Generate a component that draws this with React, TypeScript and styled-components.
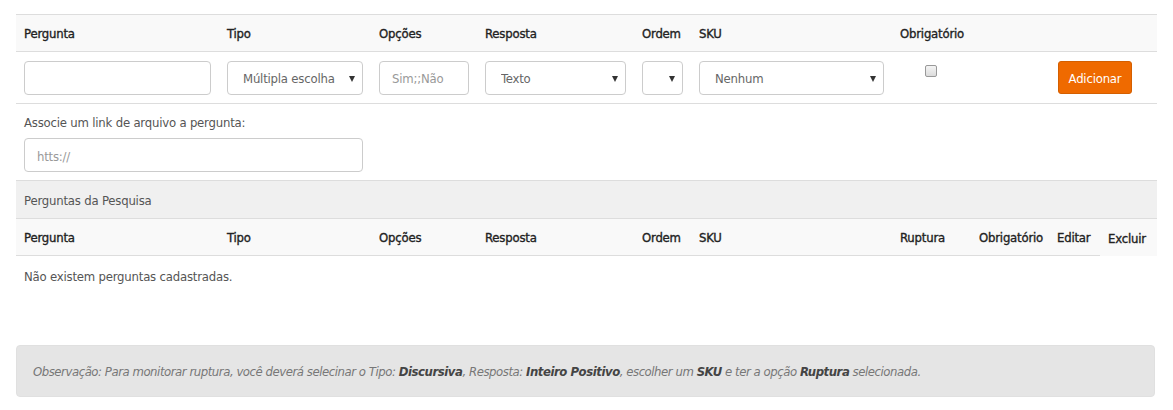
import React, { FC } from 'react';
import styled, { createGlobalStyle } from 'styled-components';

/* Global */

const GlobalStyle = createGlobalStyle`
  body {
    margin: 0;
    background: #fff;
    font-family: "DejaVu Sans Condensed", "Liberation Sans", sans-serif;
    font-size: 13px;
    letter-spacing: -0.2px;
    line-height: 18px;
    color: #555;
  }
  * {
    box-sizing: border-box;
  }
`;

/* Styled Components */

const Page = styled.div`
  width: 1141px;
  margin: 14px 16px 0;
`;

const formCols = '203px 152px 106px 157px 57px 201px 158px 107px';
const listCols = '203px 152px 106px 157px 57px 201px 79px 78px 51px 57px';

const HeaderRow = styled.div<{ $cols: string }>`
  display: grid;
  grid-template-columns: ${(p) => p.$cols};
  height: 38px;
  background: #f9f9f9;
  border-top: 1px solid #ddd;
`;

const HeadCell = styled.div<{ $noLine?: boolean }>`
  display: flex;
  align-items: center;
  padding: 2px 8px 0;
  color: #222;
  -webkit-text-stroke: 0.35px #222;
  white-space: nowrap;
  border-bottom: ${(p) => (p.$noLine ? 'none' : '1px solid #ddd')};
`;

const InputRow = styled.div`
  display: grid;
  grid-template-columns: ${formCols};
  height: 52px;
  border-bottom: 1px solid #ddd;
`;

const Cell = styled.div`
  display: flex;
  align-items: center;
  padding: 0 8px;
`;

const TextInput = styled.input`
  width: 100%;
  height: 34px;
  padding: 7px 12px 5px;
  border: 1px solid #ccc;
  border-radius: 4px;
  font: inherit;
  letter-spacing: inherit;
  color: #555;
  background: #fff;
  outline: none;

  &::placeholder {
    color: #999;
  }
`;

const SelectWrap = styled.div`
  position: relative;
  width: 100%;
`;

const Select = styled.select`
  width: 100%;
  height: 34px;
  padding: 2px 20px 0 15px;
  border: 1px solid #ccc;
  border-radius: 4px;
  font: inherit;
  letter-spacing: inherit;
  color: #666;
  background: #fff;
  appearance: none;
  outline: none;
`;

const Arrow = styled.span`
  position: absolute;
  right: 8px;
  top: 15px;
  width: 0;
  height: 0;
  border-left: 3.5px solid transparent;
  border-right: 3.5px solid transparent;
  border-top: 6px solid #333;
  pointer-events: none;
`;

const CheckCell = styled.div`
  padding: 13px 0 0 33px;
`;

const CheckBox = styled.span`
  display: block;
  width: 12px;
  height: 12px;
  border: 1px solid #999;
  border-radius: 2px;
  background: linear-gradient(#f4f4f4, #dcdcdc);
`;

const AddButton = styled.button`
  width: 74px;
  height: 33px;
  padding: 2px 0 0;
  border: 1px solid #d45f00;
  border-radius: 3px;
  background: #ef6a00;
  color: #fff;
  font: inherit;
  letter-spacing: inherit;
  cursor: pointer;
`;

const LinkBlock = styled.div`
  padding: 10px 8px 8px;
`;

const Label = styled.div`
  margin-bottom: 6px;
  color: #555;
`;

const LinkInput = styled(TextInput)`
  width: 339px;
`;

const SectionTitle = styled.div`
  height: 38px;
  display: flex;
  align-items: center;
  padding: 2px 8px 0;
  background: #f0f0f0;
  border-top: 1px solid #ddd;
  color: #555;
`;

const EmptyRow = styled.div`
  padding: 12px 8px 10px;
  color: #555;
`;

const Note = styled.div`
  margin-top: 49px;
  width: 1139px;
  height: 52px;
  display: flex;
  align-items: center;
  padding: 2px 16px 0;
  background: #e5e5e5;
  border: 1px solid #e0e0e0;
  border-radius: 4px;
  font-style: italic;
  letter-spacing: -0.45px;
  color: #777;

  b {
    color: #444;
  }
`;

/* App */

const formHeaders = ['Pergunta', 'Tipo', 'Opções', 'Resposta', 'Ordem', 'SKU', 'Obrigatório', ''];
const listHeaders = ['Pergunta', 'Tipo', 'Opções', 'Resposta', 'Ordem', 'SKU', 'Ruptura', 'Obrigatório', 'Editar', 'Excluir'];

const Dropdown: FC<{ value: string }> = ({ value }) => (
  <SelectWrap>
    <Select defaultValue={value}>
      <option value={value}>{value}</option>
    </Select>
    <Arrow />
  </SelectWrap>
);

const App: FC = () => (
  <Page>
    <GlobalStyle />
    <HeaderRow $cols={formCols}>
      {formHeaders.map((h, i) => <HeadCell key={i}>{h}</HeadCell>)}
    </HeaderRow>
    <InputRow>
      <Cell><TextInput /></Cell>
      <Cell><Dropdown value="Múltipla escolha" /></Cell>
      <Cell><TextInput placeholder="Sim;;Não" /></Cell>
      <Cell><Dropdown value="Texto" /></Cell>
      <Cell><Dropdown value="" /></Cell>
      <Cell><Dropdown value="Nenhum" /></Cell>
      <CheckCell><CheckBox /></CheckCell>
      <Cell><AddButton>Adicionar</AddButton></Cell>
    </InputRow>
    <LinkBlock>
      <Label>Associe um link de arquivo a pergunta:</Label>
      <LinkInput placeholder="htts://" />
    </LinkBlock>
    <SectionTitle>Perguntas da Pesquisa</SectionTitle>
    <HeaderRow $cols={listCols}>
      {listHeaders.map((h, i) => (
        <HeadCell key={h} $noLine={i === listHeaders.length - 1}>{h}</HeadCell>
      ))}
    </HeaderRow>
    <EmptyRow>Não existem perguntas cadastradas.</EmptyRow>
    <Note>
      <span>
        Observação: Para monitorar ruptura, você deverá selecinar o Tipo: <b>Discursiva</b>, Resposta: <b>Inteiro Positivo</b>, escolher um <b>SKU</b> e ter a opção <b>Ruptura</b> selecionada.
      </span>
    </Note>
  </Page>
);

export default App;
